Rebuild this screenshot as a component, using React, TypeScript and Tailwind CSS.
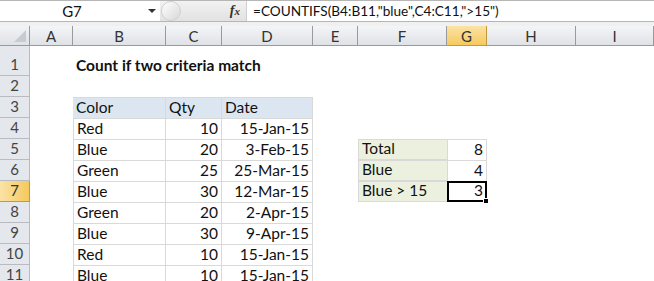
import React from "react"

const cols = ["A", "B", "C", "D", "E", "F", "G", "H", "I"]

const data = [
  ["Red", "10", "15-Jan-15"],
  ["Blue", "20", "3-Feb-15"],
  ["Green", "25", "25-Mar-15"],
  ["Blue", "30", "12-Mar-15"],
  ["Green", "20", "2-Apr-15"],
  ["Blue", "30", "9-Apr-15"],
  ["Red", "10", "15-Jan-15"],
  ["Blue", "10", "15-Jan-15"],
]

const summary: Record<number, [string, string]> = {
  5: ["Total", "8"],
  6: ["Blue", "4"],
  7: ["Blue > 15", "3"],
}

export default function App() {
  const rows = [1, 2, 3, 4, 5, 6, 7, 8, 9, 10, 11]

  return (
    <div
      className="w-[654px] h-[281px] overflow-hidden bg-white text-[15.5px] leading-[20px] text-[#111]"
      style={{ fontFamily: "Lato, 'Liberation Sans', sans-serif" }}
    >
      {/* formula bar */}
      <div className="flex h-[22px] border-t border-b border-[#b6b6b6] bg-white">
        <div className="relative flex w-[160px] items-center justify-center">
          <span className="pr-[16px] text-[15px] text-[#111]">G7</span>
          <span className="absolute right-[4px] top-[8px] h-0 w-0 border-l-[4px] border-r-[4px] border-t-[4px] border-l-transparent border-r-transparent border-t-[#333]" />
        </div>
        <div className="flex w-[86px] items-center bg-gradient-to-b from-[#f2f2f2] to-[#e2e2e2]">
          <div className="ml-[1px] h-[20px] w-[20px] rounded-full border border-[#d0d0d0] bg-gradient-to-br from-[#ffffff] to-[#d8d8d8]" />
          <span
            className="ml-auto mr-[6px] text-[14px] font-bold italic text-[#333]"
            style={{ fontFamily: "'Liberation Serif', serif" }}
          >
            f<span className="text-[11px]">x</span>
          </span>
        </div>
        <div className="flex flex-1 items-center border-l border-[#d0d0d0] pl-[6px] text-[13.6px] whitespace-nowrap">
          =COUNTIFS(B4:B11,"blue",C4:C11,"&gt;15")
        </div>
      </div>
      <div className="h-[4px] bg-[#f0f0f0]" />

      {/* sheet */}
      <div className="grid grid-cols-[30px_43px_93px_56px_91px_45px_89px_40px_89px_1fr] grid-rows-[20px_30px_repeat(10,21px)]">
        {/* corner */}
        <div className="relative border-r border-b border-[#9a9a9a] bg-gradient-to-b from-[#f2f3f5] to-[#dfe2e6]">
          <span className="absolute right-[3px] bottom-[3px] h-0 w-0 border-b-[12px] border-l-[12px] border-b-[#c8cbcf] border-l-transparent" />
        </div>
        {cols.map((c) => (
          <div
            key={c}
            className={
              c === "G"
                ? "flex items-center justify-center border-r border-b border-[#c29a3b] bg-gradient-to-b from-[#fbe3a4] to-[#f5c95c] text-[15px] text-[#333]"
                : "flex items-center justify-center border-r border-b border-[#9a9a9a] bg-gradient-to-b from-[#f4f5f7] to-[#dfe2e6] text-[15px] text-[#333]"
            }
          >
            {c}
          </div>
        ))}

        {rows.map((r) => (
          <React.Fragment key={r}>
            <div
              className={
                r === 7
                  ? "flex items-end justify-center border-r border-b border-[#c29a3b] bg-gradient-to-r from-[#fbe3a4] to-[#f5c95c] pb-[1px] text-[15px] text-[#333]"
                  : "flex items-end justify-center border-r border-b border-[#b8bcc2] bg-[#e4e7eb] pb-[1px] text-[15px] text-[#444]"
              }
            >
              {r}
            </div>
            {/* A */}
            <div />
            {r === 1 ? (
              <div className="col-span-3 flex items-end pb-[1px] pl-[3px] font-bold whitespace-nowrap">
                Count if two criteria match
              </div>
            ) : r === 2 ? (
              <>
                <div />
                <div />
                <div />
              </>
            ) : r === 3 ? (
              <>
                <div className="flex items-end border-t border-r border-[#d9d9d9] bg-[#dce6f1] pb-[1px] pl-[3px]">Color</div>
                <div className="flex items-end border-t border-r border-[#d9d9d9] bg-[#dce6f1] pb-[1px] pl-[3px]">Qty</div>
                <div className="flex items-end border-t border-r border-[#d9d9d9] bg-[#dce6f1] pb-[1px] pl-[3px]">Date</div>
              </>
            ) : (
              <>
                <div className="flex items-end border-t border-r border-l border-[#d9d9d9] pb-[1px] pl-[3px]">{data[r - 4][0]}</div>
                <div className="flex items-end justify-end border-t border-r border-[#d9d9d9] pb-[1px] pr-[3px]">{data[r - 4][1]}</div>
                <div className="flex items-end justify-end border-t border-r border-[#d9d9d9] pb-[1px] pr-[3px]">{data[r - 4][2]}</div>
              </>
            )}
            {/* E */}
            <div />
            {summary[r] ? (
              <>
                <div className="flex items-end border-t border-l border-b border-[#d9d9d9] bg-[#ebf1de] pb-[1px] pl-[3px] whitespace-nowrap">
                  {summary[r][0]}
                </div>
                {r === 7 ? (
                  <div className="relative flex items-end justify-end border-[2px] border-black pr-[2px]">
                    {summary[r][1]}
                    <span className="absolute -right-[4px] -bottom-[4px] h-[6px] w-[6px] border border-white bg-black" />
                  </div>
                ) : (
                  <div className="flex items-end justify-end border-t border-r border-l border-[#d9d9d9] pb-[1px] pr-[3px]">
                    {summary[r][1]}
                  </div>
                )}
              </>
            ) : (
              <>
                <div />
                <div />
              </>
            )}
            <div />
            <div />
          </React.Fragment>
        ))}
      </div>
    </div>
  )
}
